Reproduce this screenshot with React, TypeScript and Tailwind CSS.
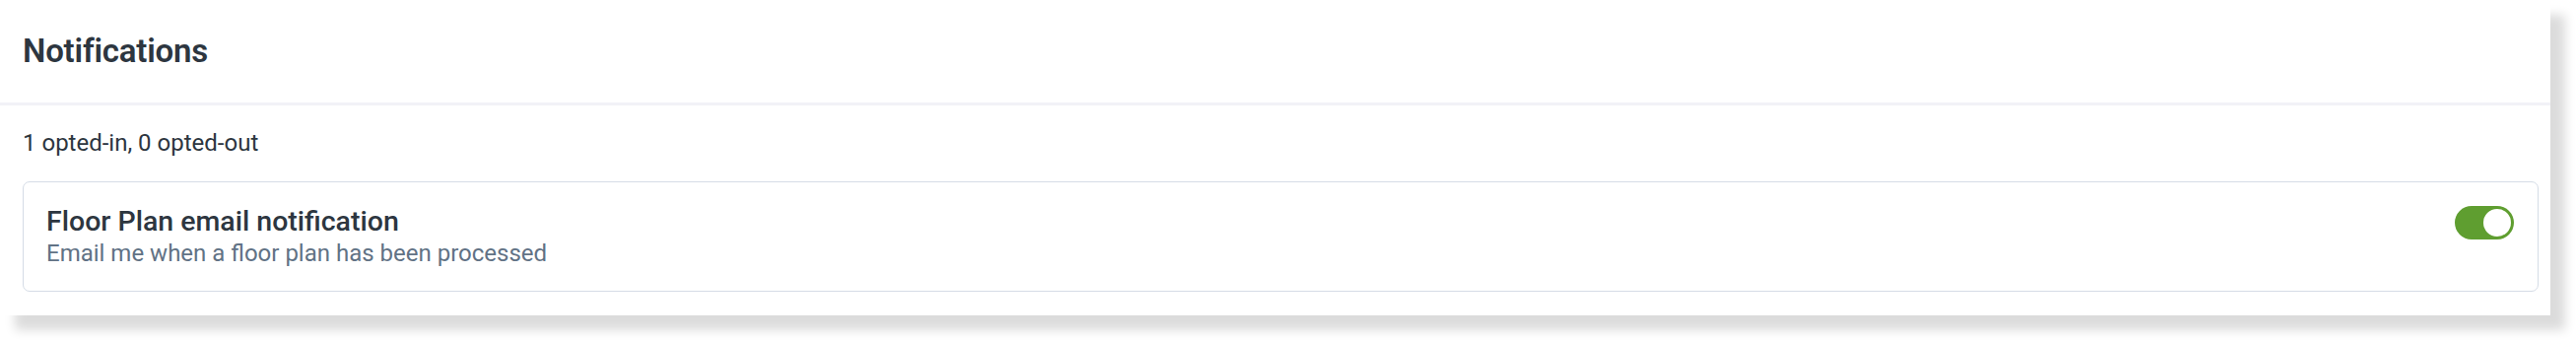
import React from "react";

export default function App() {
  return (
    <div className="w-[2614px] h-[346px] bg-white" style={{ fontFamily: "Roboto, 'Liberation Sans', sans-serif" }}>
      <div className="w-[2588px] bg-white shadow-[15px_15px_10px_rgba(0,0,0,0.14)]">
        <div className="h-[104px] flex items-center pl-[23px]">
          <h1 className="text-[33px] leading-[40px] font-semibold text-[#2d3640] tracking-[-0.2px]">Notifications</h1>
        </div>
        <div className="h-[3px] bg-[#f2f2f7]" />
        <div className="pl-[23px] pr-[12px] pt-[20px] pb-[24px]">
          <p className="text-[24px] leading-[36px] text-[#2d3640]">1 opted-in, 0 opted-out</p>
          <div className="mt-[21px] border border-[#d5dce6] rounded-[7px] pl-[23px] pr-[24px] py-[23px] flex items-start justify-between">
            <div className="flex flex-col">
              <div className="text-[28.5px] leading-[34px] font-medium text-[#2d3640]">Floor Plan email notification</div>
              <div className="text-[24px] leading-[30px] text-[#617285]">Email me when a floor plan has been processed</div>
            </div>
            <button className="mt-[1px] w-[60px] h-[34px] rounded-full bg-[#5f9e30] relative shrink-0">
              <span className="absolute top-[3px] right-[3px] w-[28px] h-[28px] rounded-full bg-white" />
            </button>
          </div>
        </div>
      </div>
    </div>
  );
}
